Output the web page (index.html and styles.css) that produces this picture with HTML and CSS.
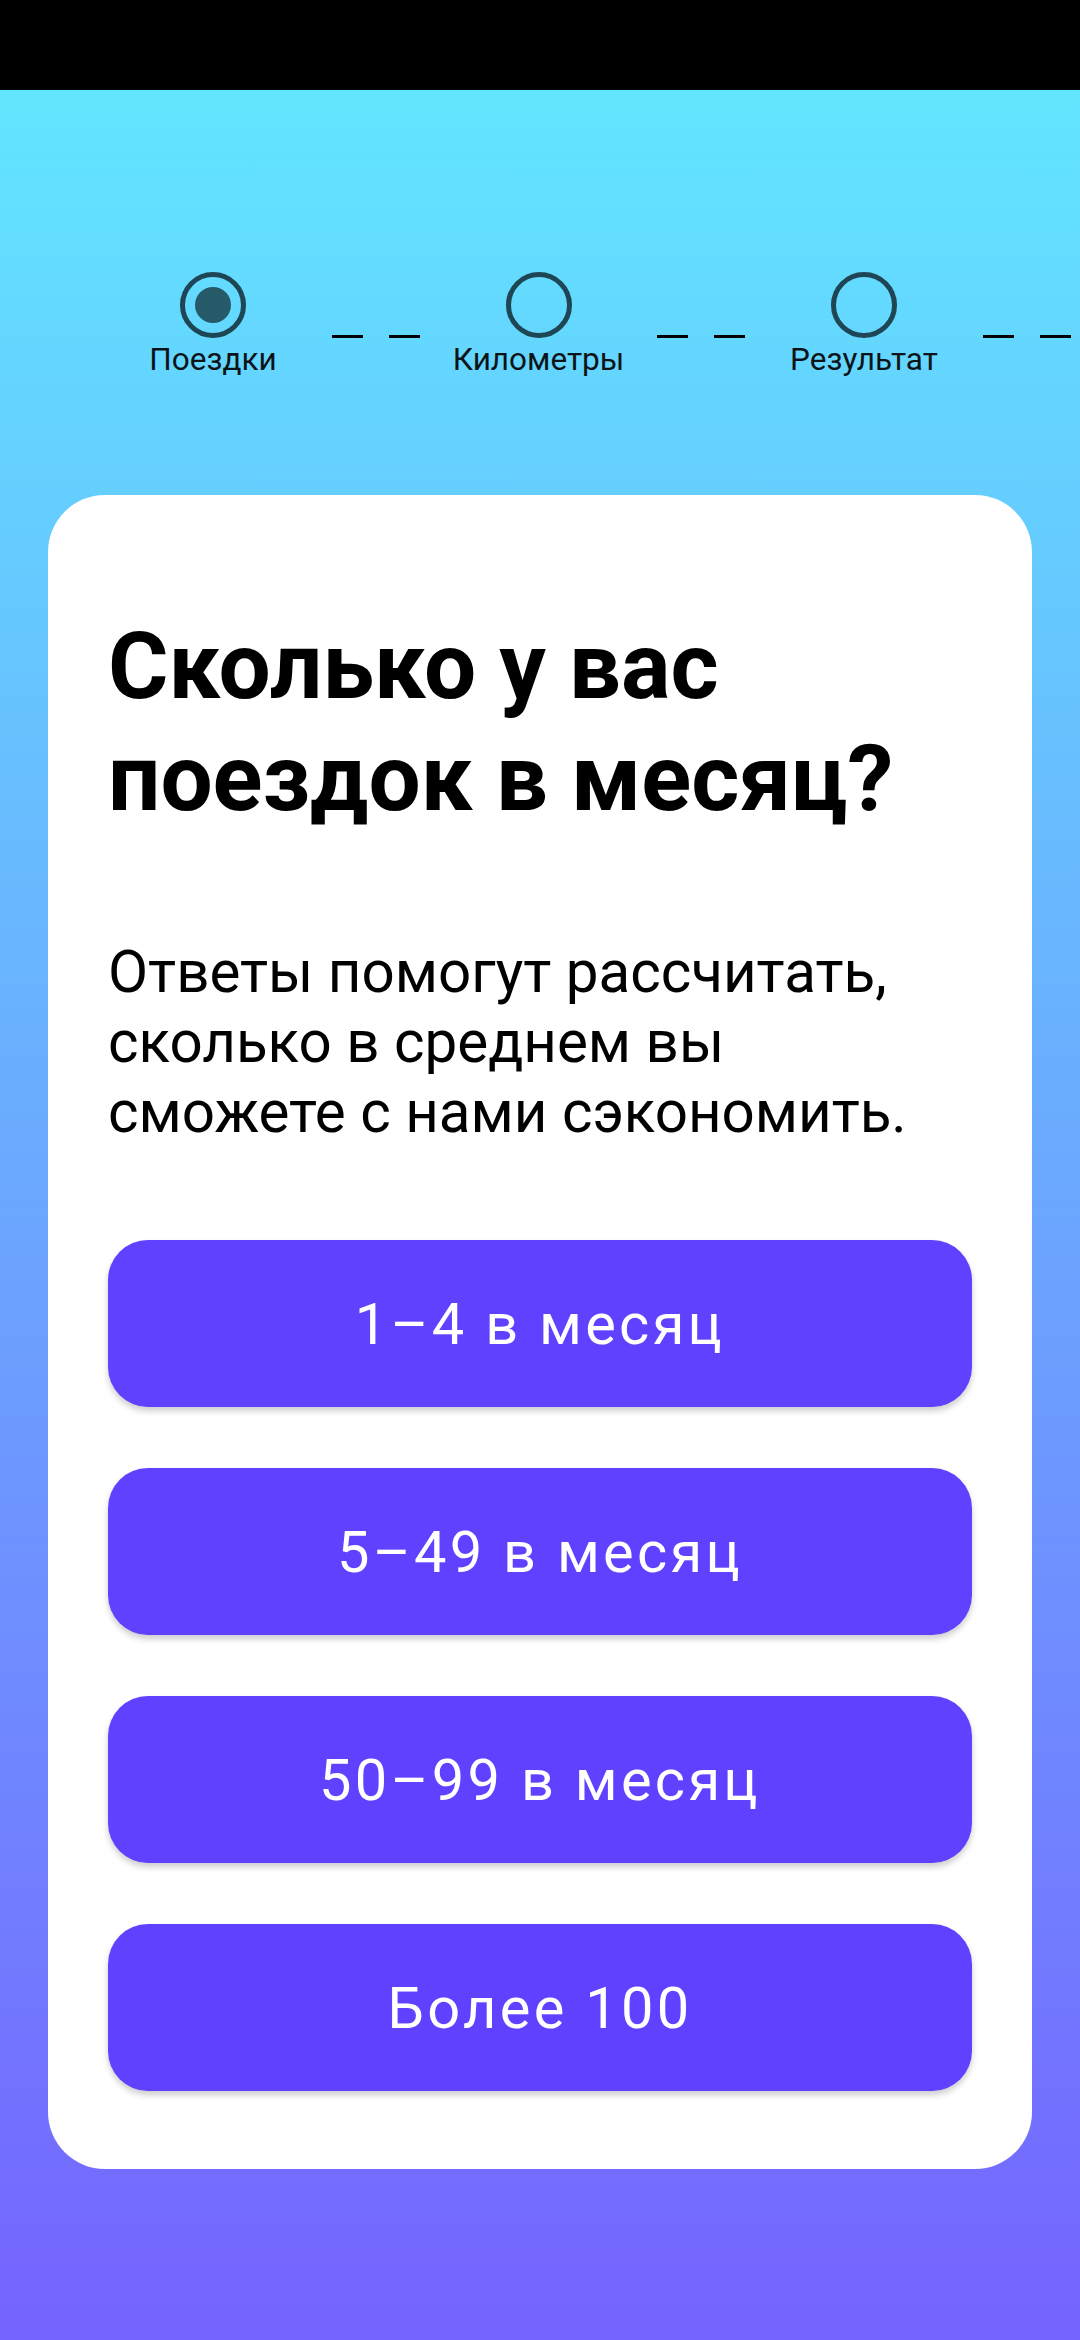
FILE: index.html
```html
<!DOCTYPE html>
<html lang="ru">
<head>
    <meta charset="UTF-8">
    <meta name="viewport" content="width=device-width, initial-scale=1.0">
    <title>Калькулятор поездок</title>
    <link rel="stylesheet" href="styles.css">
</head>
<body>
    <div class="status-bar"></div>

    <div class="screen">
        <div class="stepper">
            <div class="step active">
                <div class="circle"><div class="dot"></div></div>
                <span class="step-label">Поездки</span>
            </div>
            <div class="connector"><i></i><i></i></div>
            <div class="step">
                <div class="circle"></div>
                <span class="step-label">Километры</span>
            </div>
            <div class="connector"><i></i><i></i></div>
            <div class="step">
                <div class="circle"></div>
                <span class="step-label">Результат</span>
            </div>
            <div class="connector"><i></i><i></i></div>
        </div>

        <div class="card">
            <h1 class="question">Сколько у вас<br>поездок в месяц?</h1>
            <p class="hint">Ответы помогут рассчитать,<br>сколько в среднем вы<br>сможете с нами сэкономить.</p>
            <div class="options">
                <button class="option">1–4 в месяц</button>
                <button class="option">5–49 в месяц</button>
                <button class="option">50–99 в месяц</button>
                <button class="option">Более 100</button>
            </div>
        </div>
    </div>
</body>
</html>
```

FILE: styles.css
```css
body {
    margin: 0;
    font-family: Roboto, "Noto Sans", Arial, sans-serif;
    background: #000;
}

.status-bar {
    height: 90px;
    background: #000;
}

.screen {
    min-height: 2250px;
    overflow: hidden;
    background: linear-gradient(180deg, #62e5ff 0%, #6ba6ff 50%, #7563ff 100%);
    padding-top: 182px;
    box-sizing: border-box;
}

/* steps row */
.stepper {
    display: flex;
    padding-left: 123px;
}

.step {
    flex-shrink: 0;
    width: 180px;
    display: flex;
    flex-direction: column;
    align-items: center;
}

.circle {
    width: 66px;
    height: 66px;
    box-sizing: border-box;
    border: 5.5px solid #1e4654;
    border-radius: 50%;
    display: flex;
    align-items: center;
    justify-content: center;
}

.dot {
    width: 36px;
    height: 36px;
    border-radius: 50%;
    background: #275a69;
}

.step-label {
    margin-top: 3px;
    font-size: 31.5px;
    line-height: 37px;
    color: #0d1418;
}

.connector {
    flex-shrink: 0;
    width: 145.5px;
    height: 66px;
    display: flex;
    align-items: flex-end;
    justify-content: center;
    gap: 26px;
}

.connector i {
    width: 31px;
    height: 3.5px;
    background: #000;
}

/* question card */
.card {
    margin: 117px 48px 0;
    padding: 116px 60px 78px;
    background: #fff;
    border-radius: 57px;
}

.question {
    margin: 0;
    font-size: 92.5px;
    line-height: 112px;
    font-weight: bold;
    color: #000;
}

.hint {
    margin: 102px 0 93px;
    font-size: 58.3px;
    line-height: 70px;
    color: #000;
}

.options {
    display: flex;
    flex-direction: column;
    gap: 61px;
}

.option {
    height: 167px;
    border: none;
    border-radius: 40px;
    background: #6041ff;
    color: #fff;
    font-family: inherit;
    font-size: 57.75px;
    letter-spacing: 0.057em;
    box-shadow: 0 4px 6px rgba(0, 0, 0, 0.2);
    cursor: pointer;
}
```
